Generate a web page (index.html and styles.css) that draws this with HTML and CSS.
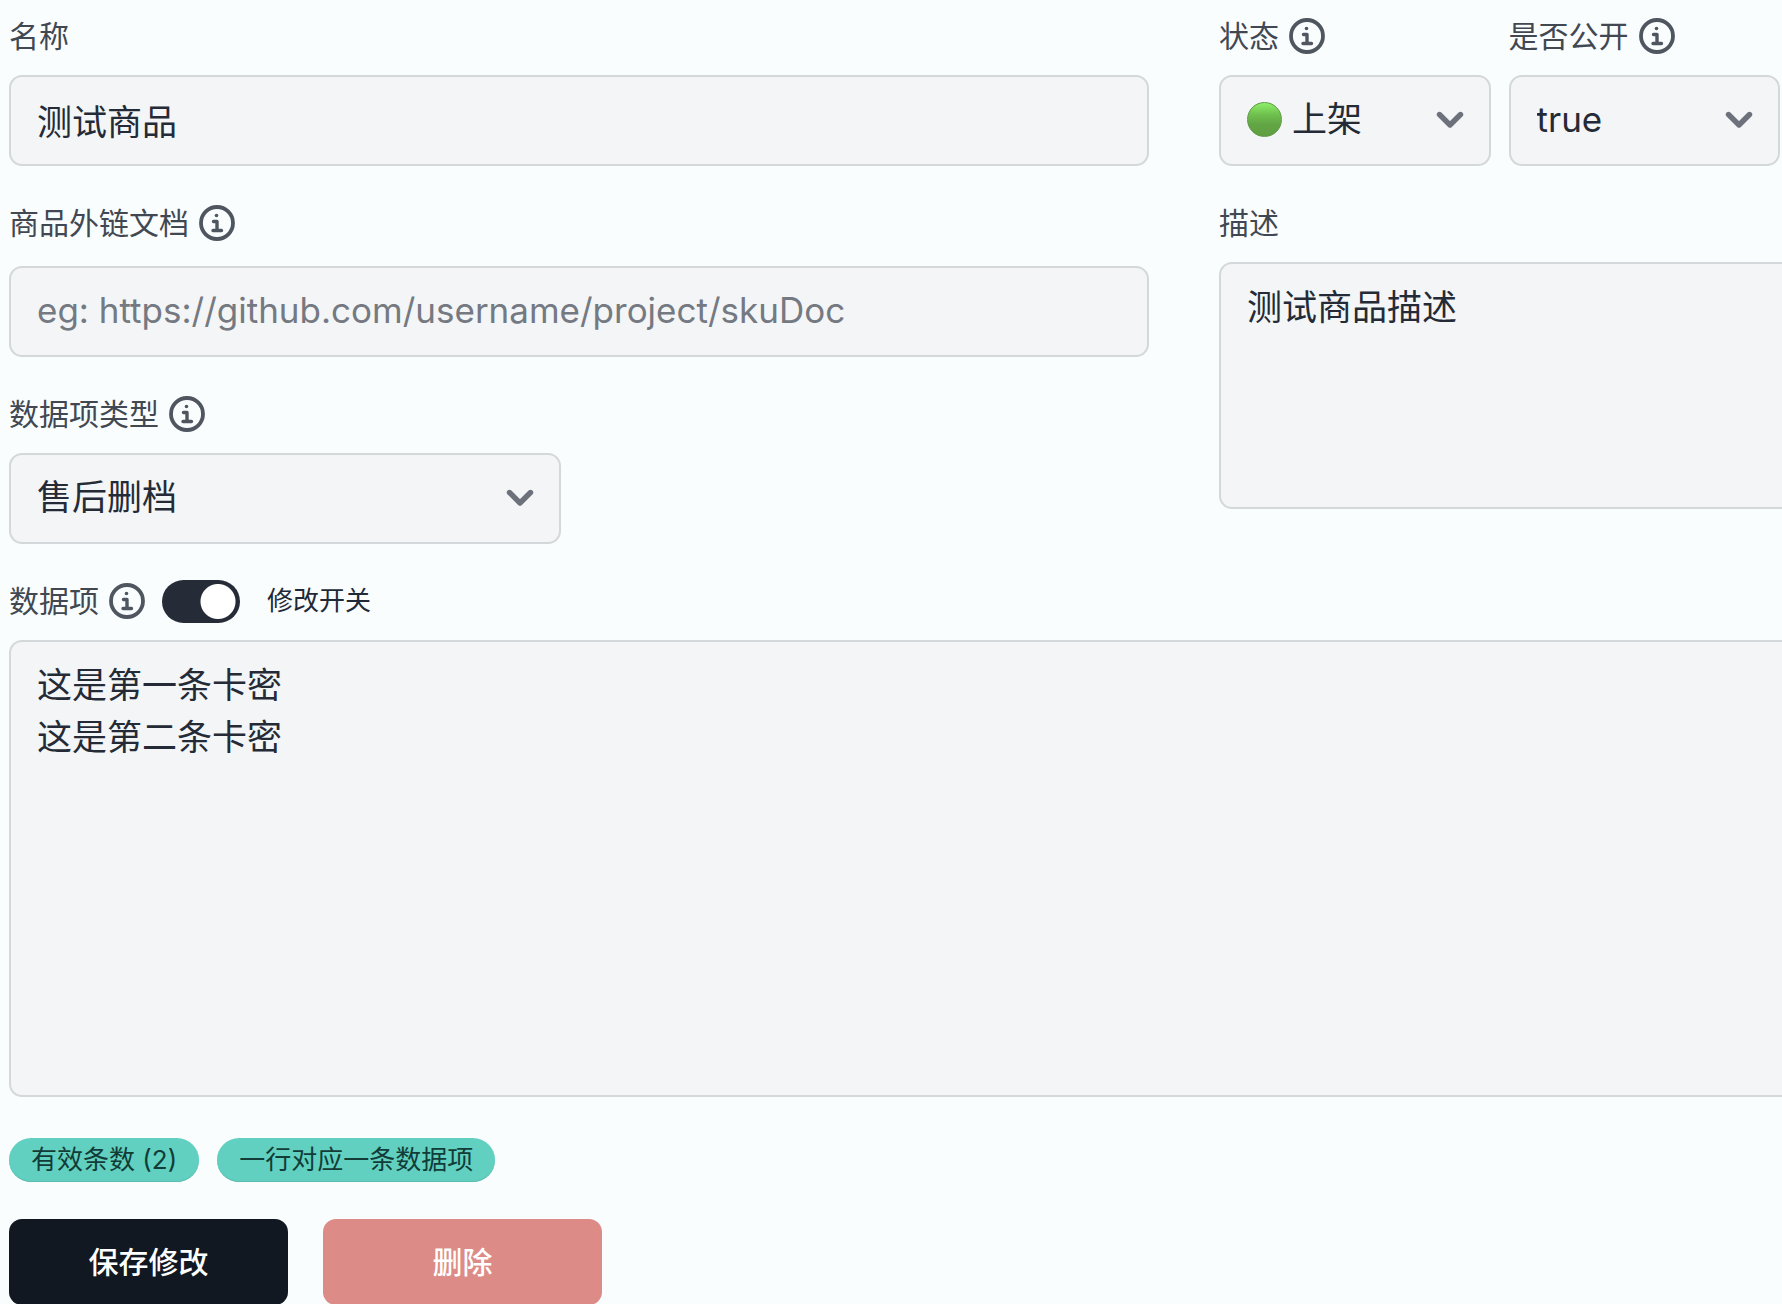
FILE: index.html
```html
<!DOCTYPE html>
<html lang="zh-CN">
<head>
<meta charset="utf-8">
<meta name="viewport" content="width=device-width, initial-scale=1">
<title>商品编辑</title>
<link rel="stylesheet" href="styles.css">
</head>
<body>
<svg class="sprite" aria-hidden="true">
  <symbol id="info" viewBox="0 0 36 36">
    <circle cx="18" cy="18" r="16" fill="none" stroke="currentColor" stroke-width="3.8"/>
    <circle cx="17.5" cy="10.5" r="1.8" fill="currentColor"/>
    <path d="M14.5 16.5H18V25.5M14 25.5H22.5" fill="none" stroke="currentColor" stroke-width="3.4" stroke-linecap="round" stroke-linejoin="round"/>
  </symbol>
  <symbol id="chevron" viewBox="0 0 28 18">
    <path d="M3.5 3.5L14 14L24.5 3.5" fill="none" stroke="currentColor" stroke-width="5.4" stroke-linecap="round" stroke-linejoin="round"/>
  </symbol>
</svg>
<form class="form">
  <div class="columns">
    <div class="column">
      <div class="field">
        <div class="label-row"><label for="name">名称</label></div>
        <input class="control" id="name" type="text" value="测试商品">
      </div>
      <div class="field">
        <div class="label-row label-row-loose"><label for="doc">商品外链文档</label><svg class="info"><use href="#info"/></svg></div>
        <input class="control" id="doc" type="text" placeholder="eg: https://github.com/username/project/skuDoc">
      </div>
      <div class="field field-half">
        <div class="label-row"><label for="type">数据项类型</label><svg class="info"><use href="#info"/></svg></div>
        <div class="select">
          <select class="control" id="type"><option>售后删档</option></select>
          <svg class="chevron"><use href="#chevron"/></svg>
        </div>
      </div>
    </div>
    <div class="column">
      <div class="pair">
        <div class="field">
          <div class="label-row"><label for="status">状态</label><svg class="info"><use href="#info"/></svg></div>
          <div class="select select-status">
            <span class="dot"></span>
            <select class="control" id="status"><option>上架</option></select>
            <svg class="chevron"><use href="#chevron"/></svg>
          </div>
        </div>
        <div class="field">
          <div class="label-row"><label for="public">是否公开</label><svg class="info"><use href="#info"/></svg></div>
          <div class="select">
            <select class="control" id="public"><option>true</option></select>
            <svg class="chevron"><use href="#chevron"/></svg>
          </div>
        </div>
      </div>
      <div class="field">
        <div class="label-row"><label for="desc">描述</label></div>
        <textarea class="control area area-desc" id="desc">测试商品描述</textarea>
      </div>
    </div>
  </div>
  <div class="field">
    <div class="label-row">
      <label for="items">数据项</label><svg class="info"><use href="#info"/></svg>
      <input class="toggle" id="editable" type="checkbox" checked>
      <label class="toggle-label" for="editable">修改开关</label>
    </div>
    <textarea class="control area area-items" id="items">这是第一条卡密
这是第二条卡密</textarea>
  </div>
  <div class="badges">
    <span class="badge">有效条数 (2)</span>
    <span class="badge">一行对应一条数据项</span>
  </div>
  <div class="actions">
    <button class="button button-save" type="button">保存修改</button>
    <button class="button button-delete" type="button">删除</button>
  </div>
</form>
</body>
</html>
```

FILE: styles.css
```css
* {
  box-sizing: border-box;
}

html {
  scrollbar-width: none;
}

body {
  margin: 0;
  overflow-x: hidden;
  background: #f9fdfe;
  color: #1f2937;
  font-family: Inter, "Noto Sans CJK SC", sans-serif;
}

.sprite {
  display: none;
}

/* The right edge of the form runs slightly past the window. */
.form {
  margin: -21px -7px 0 9px;
}

.columns {
  display: grid;
  grid-template-columns: minmax(0, 2fr) minmax(0, 1fr);
  column-gap: 70px;
}

.pair {
  display: grid;
  grid-template-columns: 1fr 1fr;
  gap: 18px;
  padding-right: 9px;
}

.field {
  padding-top: 35px;
}

.field-half {
  width: calc(50% - 18px);
}

.label-row {
  display: flex;
  align-items: center;
  height: 44px;
  margin-bottom: 17px;
  color: #424852;
  font-size: 30px;
  line-height: 44px;
}

.label-row-loose {
  margin-bottom: 21px;
}

.info {
  flex: none;
  width: 36px;
  height: 36px;
  margin-left: 10px;
  color: #50565f;
}

.control {
  display: block;
  width: 100%;
  height: 91px;
  margin: 0;
  padding: 0 26px 3px;
  border: 2px solid #d5d8da;
  border-radius: 13px;
  outline: none;
  background: #f3f5f6;
  color: #252b36;
  font-family: inherit;
  font-size: 35px;
  line-height: 52px;
  appearance: none;
}

.control::placeholder {
  color: #757982;
  opacity: 1;
}

.select {
  position: relative;
}

.select-status .control {
  padding-left: 71px;
}

.chevron {
  position: absolute;
  top: 36px;
  right: 27px;
  width: 28px;
  height: 18px;
  color: #6d717c;
  pointer-events: none;
}

.dot {
  position: absolute;
  top: 27px;
  left: 28px;
  width: 35px;
  height: 35px;
  border: 1px solid #609a49;
  border-radius: 50%;
  background: linear-gradient(#8eef68, #6fc04e 35%, #62a544 65%, #5f9f42);
  pointer-events: none;
}

.area {
  width: calc(100% + 16px);
  padding: 17px 26px;
  resize: none;
  overflow: hidden;
}

.area-desc {
  height: 247px;
}

.area-items {
  height: 457px;
}

.toggle {
  flex: none;
  width: 78px;
  height: 43px;
  margin: 0 27px 0 17px;
  border-radius: 22px;
  background: radial-gradient(circle at 56px 50%, #ffffff 17px, #252c38 18px);
  appearance: none;
}

.toggle-label {
  color: #1f2937;
  font-size: 26px;
}

.badges {
  display: flex;
  gap: 18px;
  margin-top: 41px;
}

.badge {
  height: 44px;
  padding: 0 22px;
  border-radius: 22px;
  background: #61d0c0;
  box-shadow: inset 0 -1px 0 #5abcae;
  color: #123c37;
  font-size: 26px;
  line-height: 43px;
}

.actions {
  display: flex;
  gap: 35px;
  margin-top: 37px;
}

.button {
  width: 279px;
  height: 86px;
  padding: 0 0 4px;
  border: 0;
  border-radius: 13px;
  color: #ffffff;
  font-family: inherit;
  font-size: 30px;
  font-weight: 500;
}

.button-save {
  background: #121822;
}

.button-delete {
  background: #dc8b86;
}
```
